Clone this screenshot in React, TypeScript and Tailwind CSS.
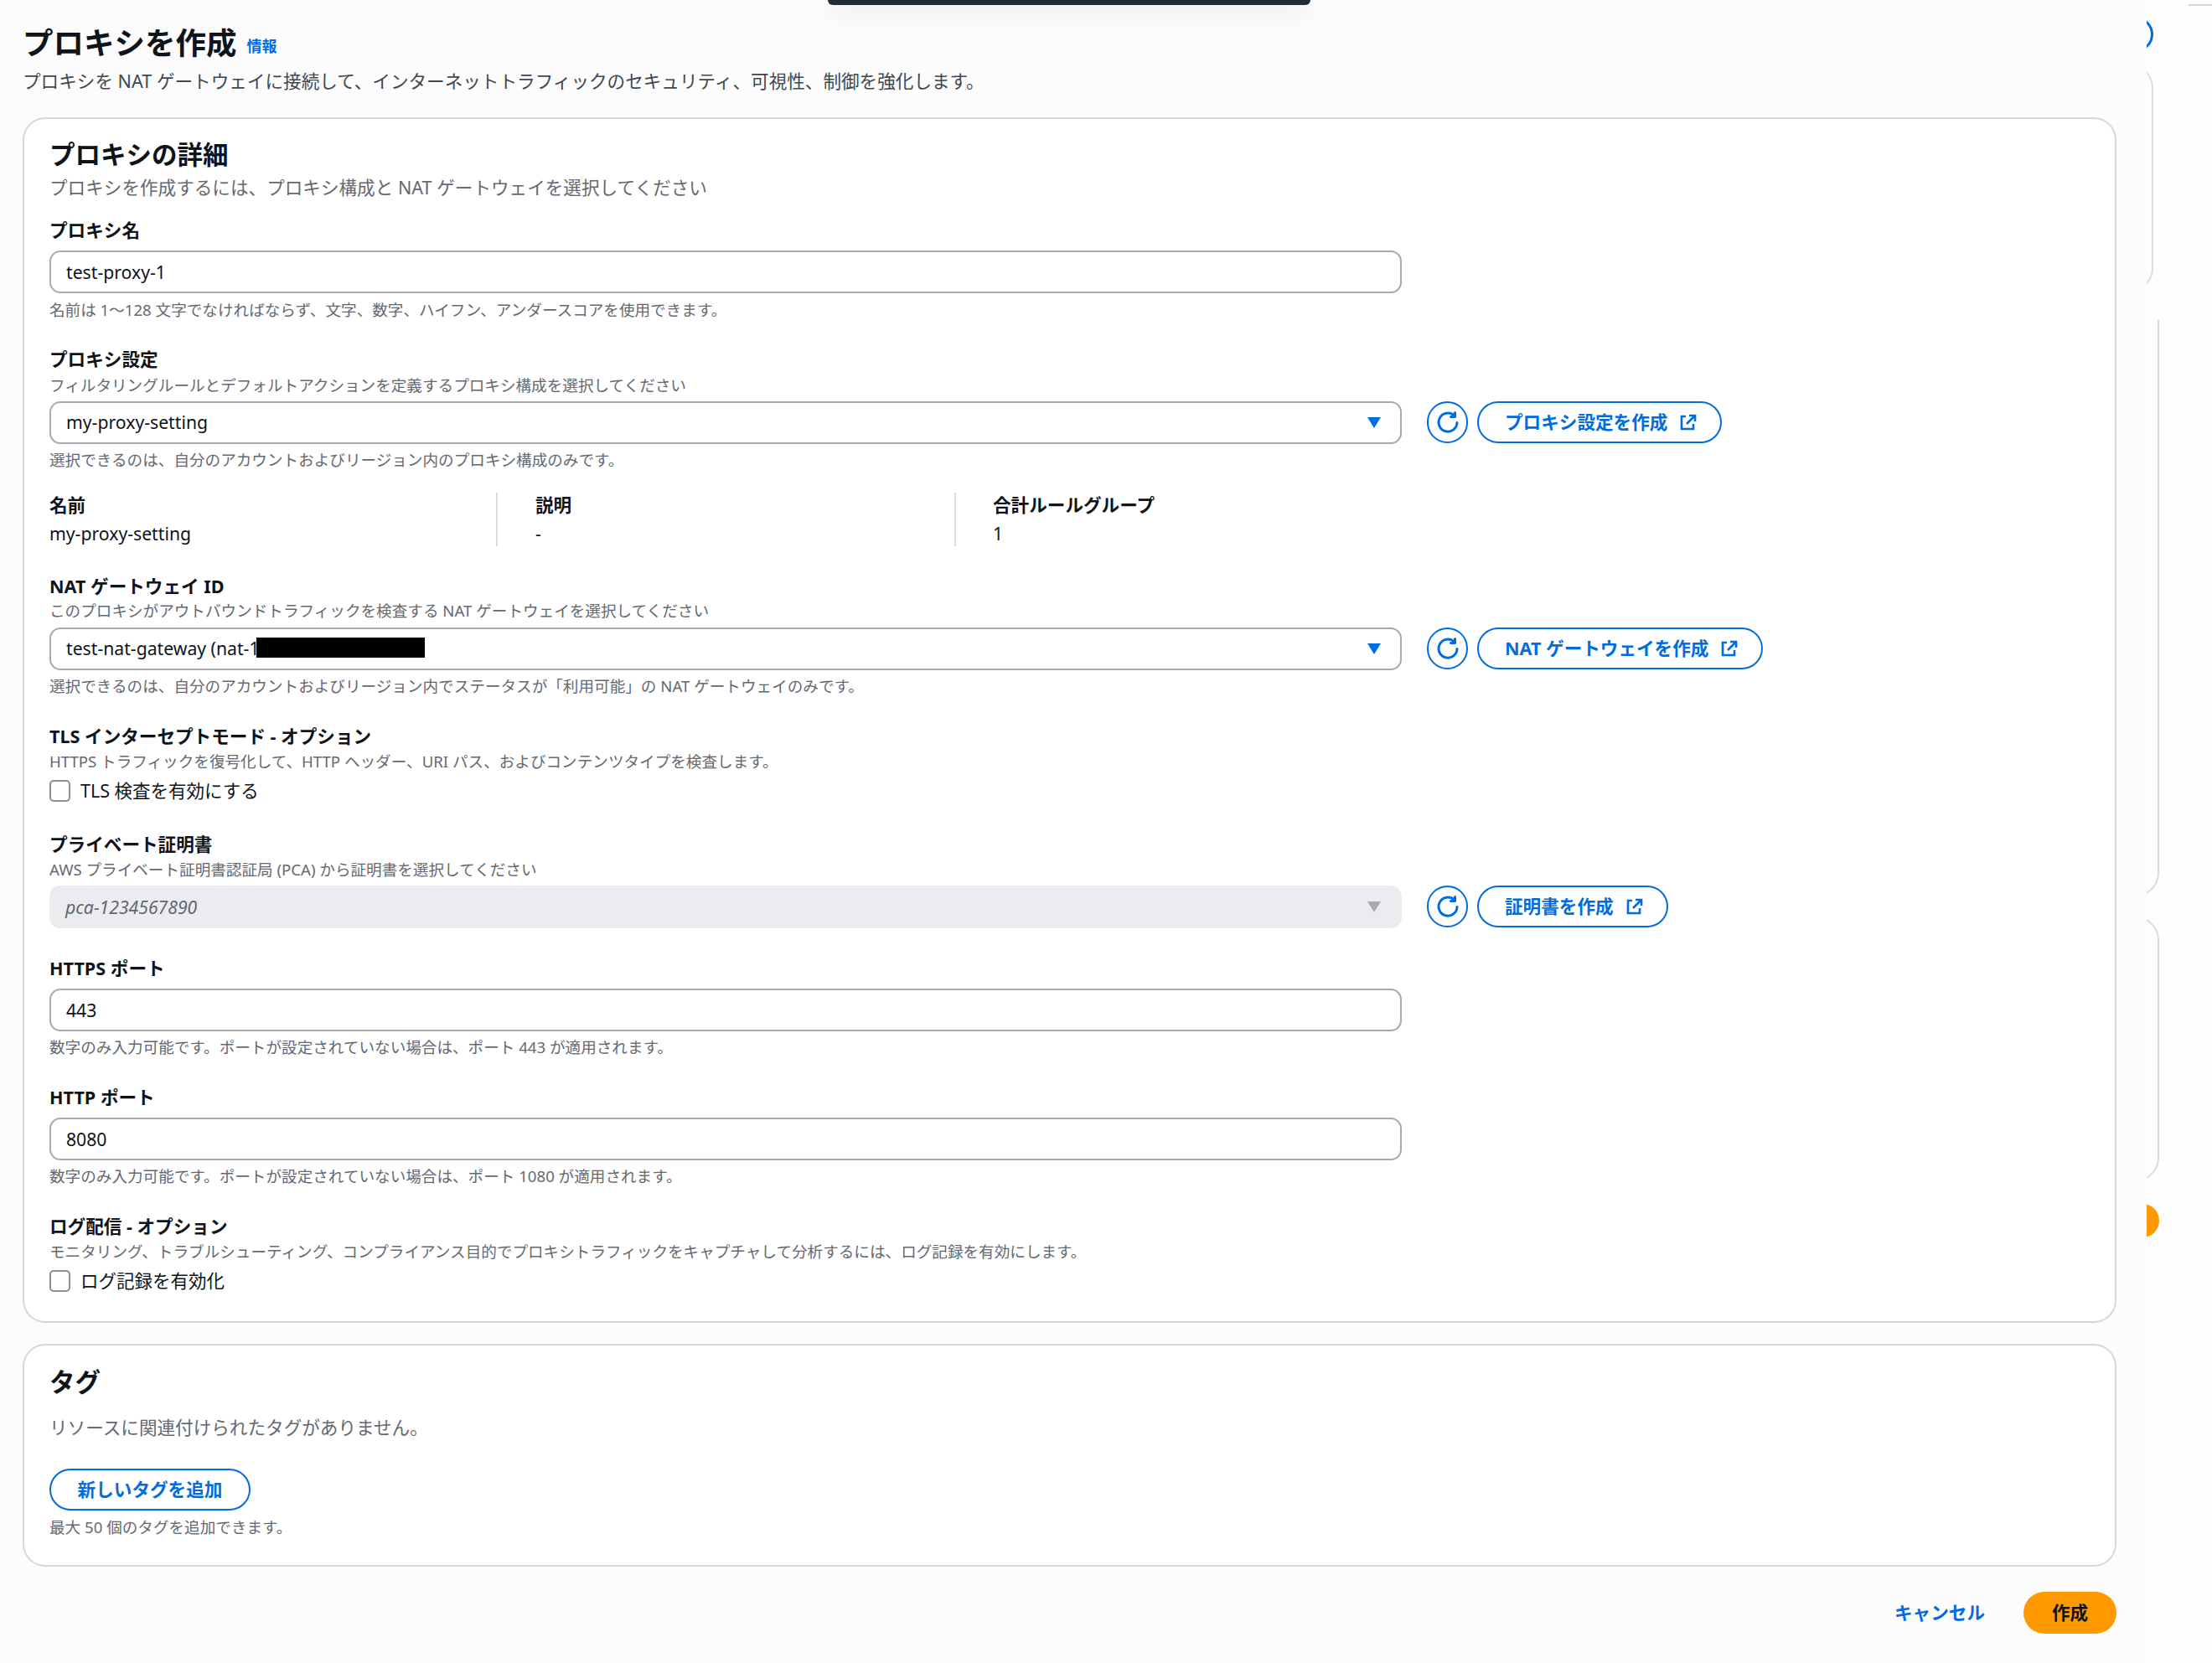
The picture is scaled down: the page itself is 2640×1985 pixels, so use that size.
import React from "react";

const BLUE = "text-[#006ce0]";

function RefreshIcon() {
  return (
    <svg viewBox="0 0 26 26" className="w-[26px] h-[26px]" fill="none" stroke="currentColor" strokeWidth="3" strokeLinecap="round" strokeLinejoin="round">
      <path d="M24 13.5A11 11 0 1 1 20.4 5" />
      <path d="M21.5 1.5V6.5H16.5" />
    </svg>
  );
}

function ExternalIcon() {
  return (
    <svg viewBox="0 0 20 20" className="w-[20px] h-[20px]" fill="none" stroke="currentColor" strokeWidth="2.6" strokeLinejoin="miter">
      <path d="M7 3H2V18H16V12" />
      <path d="M11 2H18V9" />
      <path d="M18 2L8 12" />
    </svg>
  );
}

function Arrow({ disabled }: { disabled?: boolean }) {
  return (
    <svg viewBox="0 0 16 13" className={disabled ? "w-[16px] h-[13px] text-[#a9a9b0]" : "w-[16px] h-[13px] text-[#006ce0]"} fill="currentColor">
      <path d="M0 0H16L8 13Z" />
    </svg>
  );
}

function Label({ children, className }: { children: React.ReactNode; className: string }) {
  return <div className={`h-[26px] leading-[26px] text-[21.6px] font-bold text-[#0f141a] ${className}`}>{children}</div>;
}

function Small({ children, className }: { children: React.ReactNode; className: string }) {
  return <div className={`h-[24px] leading-[24px] text-[18.6px] text-[#656871] ${className}`}>{children}</div>;
}

function TextBox({ value, className }: { value: string; className: string }) {
  return (
    <div className={`w-[1614px] h-[51px] flex items-center rounded-[13px] border-2 border-[#a9a9ae] bg-white pl-[18px] text-[21.2px] text-[#0f141a] ${className}`}>
      {value}
    </div>
  );
}

function SelectRow({
  children,
  button,
  disabled,
  className,
}: {
  children: React.ReactNode;
  button: string;
  disabled?: boolean;
  className: string;
}) {
  return (
    <div className={`flex items-start ${className}`}>
      <div
        className={
          disabled
            ? "w-[1614px] h-[51px] flex items-center justify-between rounded-[13px] bg-[#ebebf0] pl-[19px] pr-[25px] text-[21.2px] italic text-[#656871]"
            : "w-[1614px] h-[51px] flex items-center justify-between rounded-[13px] border-2 border-[#a9a9ae] bg-white pl-[18px] pr-[23px] text-[21.2px] text-[#0f141a]"
        }
      >
        <div className={disabled ? "flex items-center" : "flex items-center pb-[2px]"}>{children}</div>
        <Arrow disabled={disabled} />
      </div>
      <div className="ml-[30px] w-[49px] h-[50px] rounded-full border-[2.5px] border-[#006ce0] bg-white flex items-center justify-center text-[#006ce0]">
        <RefreshIcon />
      </div>
      <div className="ml-[11px] h-[50px] rounded-full border-[2.5px] border-[#006ce0] bg-white flex items-center pl-[31px] pr-[28px] gap-[15px] text-[21.6px] font-bold text-[#006ce0]">
        <span>{button}</span>
        <ExternalIcon />
      </div>
    </div>
  );
}

function Check({ label, className }: { label: string; className: string }) {
  return (
    <div className={`flex items-center h-[26px] ${className}`}>
      <div className="w-[25px] h-[26px] rounded-[5px] border-2 border-[#8c8c94] bg-white" />
      <span className="ml-[12px] text-[21.5px] leading-[26px] text-[#0f141a]">{label}</span>
    </div>
  );
}

function KeyValue({ k, v, className }: { k: string; v: string; className: string }) {
  return (
    <div className={`h-[64px] ${className}`}>
      <div className="h-[30px] leading-[30px] text-[21.6px] font-bold text-[#0f141a]">{k}</div>
      <div className="mt-[4px] h-[30px] leading-[30px] text-[21.2px] text-[#0f141a]">{v}</div>
    </div>
  );
}

export default function App() {
  return (
    <div
      lang="ja"
      className="relative w-[2640px] h-[1985px] overflow-hidden flex bg-[#fefefe] font-['Noto_Sans','Noto_Sans_CJK_JP',sans-serif]"
    >
      {/* dark toolbar poking in from the top */}
      <div className="absolute left-[988px] top-0 w-[576px] h-[6px] rounded-b-[10px] bg-[#232b38] shadow-[0_8px_24px_rgba(0,0,0,0.14)]" />

      {/* main column */}
      <main className="w-[2562px] shrink-0 bg-[#fcfcfd] pl-[27px] pr-[36px] pt-[29px]">
        <div className="h-[44px] flex items-center">
          <h1 className="text-[36.5px] leading-[44px] font-bold text-[#0f141a]">プロキシを作成</h1>
          <a className={`ml-[12px] mt-[9px] text-[18px] font-bold ${BLUE}`}>情報</a>
        </div>
        <p className="mt-[9px] h-[30px] leading-[30px] text-[21.6px] text-[#414750]">
          プロキシを NAT ゲートウェイに接続して、インターネットトラフィックのセキュリティ、可視性、制御を強化します。
        </p>

        {/* details card */}
        <section className="mt-[28px] h-[1439px] rounded-[27px] border-2 border-[#d6d6db] bg-white pl-[30px] pt-[22px]">
          <h2 className="h-[40px] leading-[40px] text-[30.5px] font-bold text-[#0f141a]">プロキシの詳細</h2>
          <p className="mt-[6px] h-[28px] leading-[28px] text-[21.6px] text-[#656871]">
            プロキシを作成するには、プロキシ構成と NAT ゲートウェイを選択してください
          </p>

          <Label className="mt-[24px]">プロキシ名</Label>
          <TextBox value="test-proxy-1" className="mt-[11px] pt-[1px]" />
          <Small className="mt-[8px]">名前は 1～128 文字でなければならず、文字、数字、ハイフン、アンダースコアを使用できます。</Small>

          <Label className="mt-[34px]">プロキシ設定</Label>
          <Small className="mt-[6px]">フィルタリングルールとデフォルトアクションを定義するプロキシ構成を選択してください</Small>
          <SelectRow button="プロキシ設定を作成" className="mt-[7px]">my-proxy-setting</SelectRow>
          <Small className="mt-[7px]">選択できるのは、自分のアカウントおよびリージョン内のプロキシ構成のみです。</Small>

          <div className="mt-[27px] flex h-[64px]">
            <KeyValue k="名前" v="my-proxy-setting" className="w-[533px]" />
            <div className="w-[2px] bg-[#dcdce0]" />
            <KeyValue k="説明" v="-" className="ml-[45px] w-[500px]" />
            <div className="w-[2px] bg-[#dcdce0]" />
            <KeyValue k="合計ルールグループ" v="1" className="ml-[44px] w-[300px]" />
          </div>

          <Label className="mt-[35px]">NAT ゲートウェイ ID</Label>
          <Small className="mt-[4px]">このプロキシがアウトバウンドトラフィックを検査する NAT ゲートウェイを選択してください</Small>
          <SelectRow button="NAT ゲートウェイを作成" className="mt-[8px]">
            <span>test-nat-gateway (nat-1</span>
            <span className="-ml-[4px] w-[201px] h-[24px] bg-black" />
          </SelectRow>
          <Small className="mt-[7px]">選択できるのは、自分のアカウントおよびリージョン内でステータスが「利用可能」の NAT ゲートウェイのみです。</Small>

          <Label className="mt-[35px]">TLS インターセプトモード - オプション</Label>
          <Small className="mt-[5px]">HTTPS トラフィックを復号化して、HTTP ヘッダー、URI パス、およびコンテンツタイプを検査します。</Small>
          <Check label="TLS 検査を有効にする" className="mt-[10px]" />

          <Label className="mt-[38px]">プライベート証明書</Label>
          <Small className="mt-[5px]">AWS プライベート証明書認証局 (PCA) から証明書を選択してください</Small>
          <SelectRow button="証明書を作成" disabled className="mt-[7px]">pca-1234567890</SelectRow>

          <Label className="mt-[35px]">HTTPS ポート</Label>
          <TextBox value="443" className="mt-[11px]" />
          <Small className="mt-[7px]">数字のみ入力可能です。ポートが設定されていない場合は、ポート 443 が適用されます。</Small>

          <Label className="mt-[35px]">HTTP ポート</Label>
          <TextBox value="8080" className="mt-[11px]" />
          <Small className="mt-[7px]">数字のみ入力可能です。ポートが設定されていない場合は、ポート 1080 が適用されます。</Small>

          <Label className="mt-[35px]">ログ配信 - オプション</Label>
          <Small className="mt-[5px]">モニタリング、トラブルシューティング、コンプライアンス目的でプロキシトラフィックをキャプチャして分析するには、ログ記録を有効にします。</Small>
          <Check label="ログ記録を有効化" className="mt-[10px]" />
        </section>

        {/* tags card */}
        <section className="mt-[25px] h-[266px] rounded-[27px] border-2 border-[#d6d6db] bg-white pl-[30px] pt-[23px]">
          <h2 className="h-[40px] leading-[40px] text-[30.5px] font-bold text-[#0f141a]">タグ</h2>
          <p className="mt-[21px] h-[28px] leading-[28px] text-[21.6px] text-[#656871]">リソースに関連付けられたタグがありません。</p>
          <div className="mt-[35px] w-[240px] h-[50px] rounded-full border-[2.5px] border-[#006ce0] flex items-center justify-center text-[21.6px] font-bold text-[#006ce0]">
            新しいタグを追加
          </div>
          <Small className="mt-[8px]">最大 50 個のタグを追加できます。</Small>
        </section>

        {/* footer */}
        <div className="mt-[30px] flex items-center justify-end">
          <a className={`text-[21.6px] font-bold ${BLUE}`}>キャンセル</a>
          <div className="ml-[46px] w-[111px] h-[50px] rounded-full bg-[#ff9900] flex items-center justify-center text-[21.6px] font-bold text-[#0f141a]">
            作成
          </div>
        </div>
      </main>

      {/* clipped right-hand column */}
      <aside className="w-[78px] shrink-0 overflow-hidden pt-[5px]">
        <div className="ml-[50px] w-[28px] h-[2px] bg-[#d6d6db]" />
        <div className="mt-[13px] -ml-[34px] w-[42px] h-[42px] rounded-full border-[3px] border-[#006ce0]" />
        <div className="mt-[15px] -ml-[60px] w-[68px] h-[271px] rounded-[28px] border-2 border-[#dcdce0]" />
        <div className="mt-[34px] -ml-[60px] w-[75px] h-[688px] rounded-b-[28px] border-2 border-t-0 border-[#dcdce0]" />
        <div className="mt-[24px] -ml-[60px] w-[75px] h-[316px] rounded-[28px] border-2 border-[#dcdce0]" />
        <div className="mt-[27px] -ml-[25px] w-[40px] h-[40px] rounded-full bg-[#ff9900]" />
      </aside>
    </div>
  );
}
